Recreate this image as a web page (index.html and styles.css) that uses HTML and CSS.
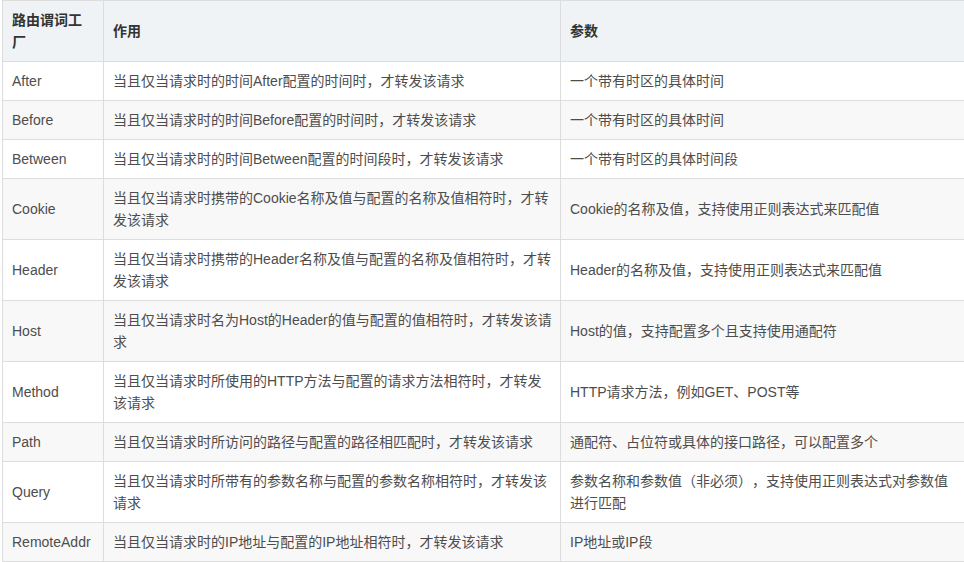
FILE: index.html
```html
<!DOCTYPE html>
<html lang="zh-CN">
<head>
<meta charset="utf-8">
<title>路由谓词工厂</title>
<link rel="stylesheet" href="styles.css">
</head>
<body>
<div class="page">
<table class="pred-table">
  <colgroup>
    <col class="c1">
    <col class="c2">
    <col class="c3">
  </colgroup>
  <thead>
    <tr><th>路由谓词工厂</th><th>作用</th><th>参数</th></tr>
  </thead>
  <tbody>
    <tr><td>After</td><td>当且仅当请求时的时间After配置的时间时，才转发该请求</td><td>一个带有时区的具体时间</td></tr>
    <tr><td>Before</td><td>当且仅当请求时的时间Before配置的时间时，才转发该请求</td><td>一个带有时区的具体时间</td></tr>
    <tr><td>Between</td><td>当且仅当请求时的时间Between配置的时间段时，才转发该请求</td><td>一个带有时区的具体时间段</td></tr>
    <tr><td>Cookie</td><td>当且仅当请求时携带的Cookie名称及值与配置的名称及值相符时，才转发该请求</td><td>Cookie的名称及值，支持使用正则表达式来匹配值</td></tr>
    <tr><td>Header</td><td>当且仅当请求时携带的Header名称及值与配置的名称及值相符时，才转发该请求</td><td>Header的名称及值，支持使用正则表达式来匹配值</td></tr>
    <tr><td>Host</td><td>当且仅当请求时名为Host的Header的值与配置的值相符时，才转发该请求</td><td>Host的值，支持配置多个且支持使用通配符</td></tr>
    <tr><td>Method</td><td>当且仅当请求时所使用的HTTP方法与配置的请求方法相符时，才转发该请求</td><td>HTTP请求方法，例如GET、POST等</td></tr>
    <tr><td>Path</td><td>当且仅当请求时所访问的路径与配置的路径相匹配时，才转发该请求</td><td>通配符、占位符或具体的接口路径，可以配置多个</td></tr>
    <tr><td>Query</td><td>当且仅当请求时所带有的参数名称与配置的参数名称相符时，才转发该请求</td><td>参数名称和参数值（非必须），支持使用正则表达式对参数值进行匹配</td></tr>
    <tr><td>RemoteAddr</td><td>当且仅当请求时的IP地址与配置的IP地址相符时，才转发该请求</td><td>IP地址或IP段</td></tr>
  </tbody>
</table>
</div>
</body>
</html>
```

FILE: styles.css
```css
html, body {
  margin: 0;
  padding: 0;
  background: #ffffff;
}

.page {
  padding-left: 2px;
}

.pred-table {
  border-collapse: collapse;
  table-layout: fixed;
  width: 962px;
  font-family: "Liberation Sans", "Noto Sans CJK SC", sans-serif;
  font-size: 14px;
  line-height: 22px;
  color: #4d4d4d;
  text-spacing-trim: space-all;
}

.c1 { width: 101px; }
.c2 { width: 457px; }
.c3 { width: 404px; }

.pred-table th,
.pred-table td {
  border: 1px solid #dddddd;
  padding: 8px 8px 8px 9px;
  text-align: left;
  vertical-align: middle;
  word-break: break-all;
}

.pred-table th {
  background: #eff3f5;
  color: #333333;
  font-weight: bold;
}

.pred-table tbody tr:nth-child(2n) {
  background: #f8f8f8;
}
```
